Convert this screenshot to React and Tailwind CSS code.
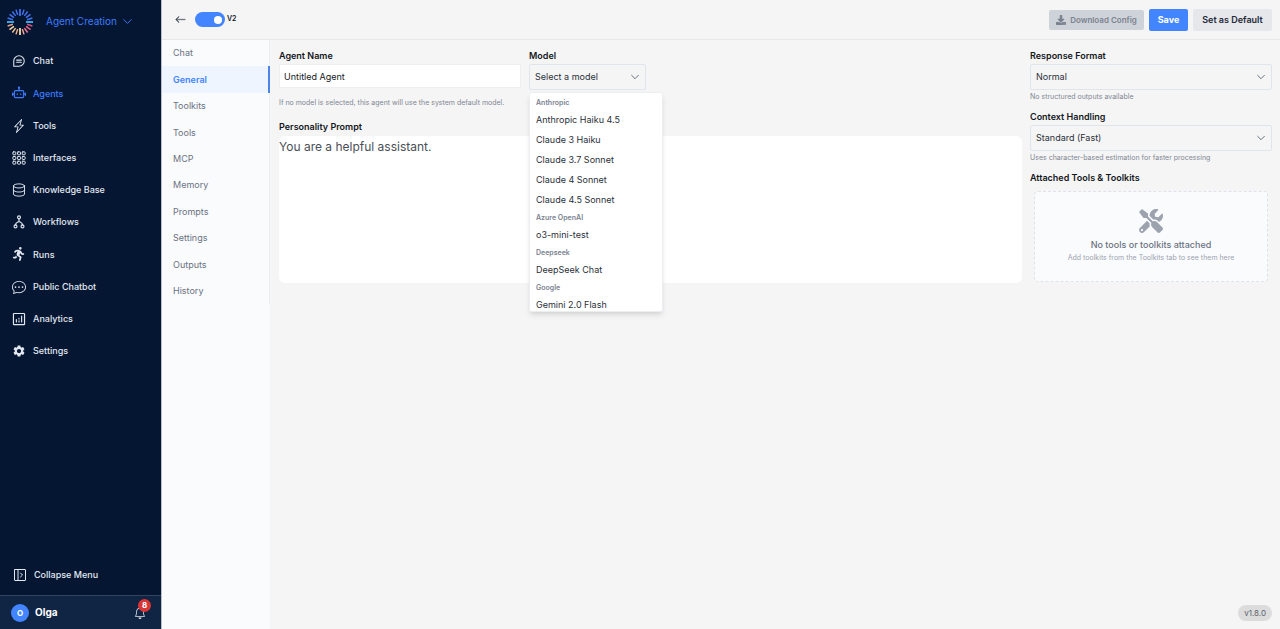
import { useState } from "react";
import {
  BsArrowLeft,
  BsBell,
  BsChatDots,
  BsLightningCharge,
} from "react-icons/bs";
import { FaDownload, FaTools } from "react-icons/fa";
import { FaPersonRunning } from "react-icons/fa6";
import { MdSettings } from "react-icons/md";

const Svg = ({ children, width = 1.5 }) => (
  <svg
    viewBox="0 0 24 24"
    className="size-full"
    fill="none"
    stroke="currentColor"
    strokeWidth={width}
    strokeLinecap="round"
    strokeLinejoin="round"
  >
    {children}
  </svg>
);

const ChatIcon = () => (
  <Svg width={1.8}>
    <path d="M3 21V12a9 9 0 1 1 9 9H3z" />
    <path d="M8 10.5h8M8 14h8" />
  </Svg>
);

const AgentIcon = () => (
  <Svg width={2}>
    <rect x="4" y="8" width="16" height="12" rx="2" />
    <path d="M12 8V3M1 12v4M23 12v4M2 14h2M20 14h2M9 13.5v1M15 13.5v1" />
    <circle cx="12" cy="3" r="1" />
  </Svg>
);

const GridIcon = () => (
  <Svg width={1.7}>
    {[1.5, 9.5, 17.5].map((y) =>
      [1.5, 9.5, 17.5].map((x) => (
        <rect key={`${x}-${y}`} x={x} y={y} width="5" height="5" rx="1" />
      ))
    )}
  </Svg>
);

const DatabaseIcon = () => (
  <Svg width={1.6}>
    <ellipse cx="12" cy="5" rx="9.5" ry="3.5" />
    <path d="M2.5 5v14c0 2 4.2 3.5 9.5 3.5s9.5-1.5 9.5-3.5V5" />
    <path d="M2.5 12c0 2 4.2 3.5 9.5 3.5s9.5-1.5 9.5-3.5" />
  </Svg>
);

const WorkflowIcon = () => (
  <Svg width={2}>
    <circle cx="12" cy="4" r="2.5" />
    <circle cx="6" cy="19.5" r="2.5" />
    <circle cx="18" cy="19.5" r="2.5" />
    <path d="M12 6.5V11M6 17c0-4 2-4 6-6 4 2 6 2 6 6" />
  </Svg>
);

const AnalyticsIcon = () => (
  <Svg width={2}>
    <rect x="2.5" y="2.5" width="19" height="19" rx="1" />
    <path d="M7.5 13v4M12 11v1M12 15v2M16.5 7v10" />
  </Svg>
);

const CollapseIcon = () => (
  <Svg width={2}>
    <rect x="1" y="1" width="22" height="22" rx="1" />
    <path d="M8 1v22M13 8l4 4-4 4" />
  </Svg>
);

const Chevron = () => (
  <Svg width={2.5}>
    <path d="M2 7l10 10L22 7" />
  </Svg>
);

// Ring of dashes: blue over the top, cyan at the sides, warm tones below
const rays = [
  "#3e6ff0", "#4a72e8", "#3e6ff0", "#4a72e8", "#3e6ff0", "#41b5f5",
  "#d9567f", "#e8688a", "#f07a90", "#f7a59a", "#f7dcae", "#f5b08a",
  "#f0c08a", "#f7dcae", "#e9a08c", "#41b5f5", "#3e6ff0", "#4a72e8",
  "#3e6ff0", "#4a72e8",
];

const Logo = () => (
  <svg viewBox="0 0 28 28" className="size-7 shrink-0">
    {rays.map((color, i) => (
      <line
        key={i}
        x1="14"
        y1="1"
        x2="14"
        y2={i % 5 === 0 ? 8 : 6.5}
        stroke={color}
        strokeWidth={i % 5 === 0 ? 1.8 : 1.5}
        transform={`rotate(${i * 18} 14 14)`}
      />
    ))}
  </svg>
);

const menu = [
  { label: "Chat", icon: ChatIcon },
  { label: "Agents", icon: AgentIcon },
  { label: "Tools", icon: BsLightningCharge },
  { label: "Interfaces", icon: GridIcon },
  { label: "Knowledge Base", icon: DatabaseIcon },
  { label: "Workflows", icon: WorkflowIcon },
  { label: "Runs", icon: FaPersonRunning },
  { label: "Public Chatbot", icon: BsChatDots },
  { label: "Analytics", icon: AnalyticsIcon },
  { label: "Settings", icon: MdSettings },
];

const tabs = [
  "Chat",
  "General",
  "Toolkits",
  "Tools",
  "MCP",
  "Memory",
  "Prompts",
  "Settings",
  "Outputs",
  "History",
];

const models = [
  {
    provider: "Anthropic",
    items: [
      "Anthropic Haiku 4.5",
      "Claude 3 Haiku",
      "Claude 3.7 Sonnet",
      "Claude 4 Sonnet",
      "Claude 4.5 Sonnet",
    ],
  },
  { provider: "Azure OpenAI", items: ["o3-mini-test"] },
  { provider: "Deepseek", items: ["DeepSeek Chat"] },
  { provider: "Google", items: ["Gemini 2.0 Flash"] },
];

const Sidebar = () => (
  <aside className="w-[162px] shrink-0 flex flex-col bg-[#051633] border-r border-[#b9bec8] text-[#e3e8f0]">
    <div className="h-[45px] flex items-center pl-[6px] pb-[2px]">
      <Logo />
      <button className="flex items-center gap-[6px] ml-3 text-[10px] text-[#3e7bfa]">
        Agent Creation
        <span className="size-[9px]">
          <Chevron />
        </span>
      </button>
    </div>
    <nav className="h-[322px] flex flex-col">
      {menu.map(({ label, icon: Icon }) => (
        <a
          key={label}
          href="#"
          className={`flex-1 flex items-center pl-3 gap-[7px] text-[9px] font-medium ${
            label === "Agents" ? "text-[#3e7bfa]" : ""
          }`}
        >
          <span className="size-[14px]">
            <Icon className="size-full" />
          </span>
          {label}
        </a>
      ))}
    </nav>
    <button className="mt-auto mb-3 h-4 flex items-center gap-2 pl-[14px] text-[9px] font-medium">
      <span className="size-3">
        <CollapseIcon />
      </span>
      Collapse Menu
    </button>
    <div className="h-[34px] flex items-center pl-[11px] pr-[15px] bg-[#102444] border-t border-[#33425e]">
      <span className="size-[18px] rounded-full bg-[#4285ff] text-white text-[8px] font-bold flex items-center justify-center">
        O
      </span>
      <span className="ml-[6px] text-[10px] font-bold text-white">Olga</span>
      <button aria-label="Notifications" className="relative ml-auto">
        <BsBell className="size-3" />
        <span className="absolute -top-[8px] left-[4px] size-[13px] rounded-full bg-[#d93636] text-white text-[8px] font-bold flex items-center justify-center">
          8
        </span>
      </button>
    </div>
  </aside>
);

const TopBar = () => {
  const [enabled, setEnabled] = useState(true);

  return (
    <header className="h-10 shrink-0 flex items-center pl-[13px] pr-2 border-b border-[#e6e8ec]">
      <button aria-label="Back" className="text-[#3c4452]">
        <BsArrowLeft className="size-[11px]" strokeWidth="0.5" />
      </button>
      <label className="flex items-center ml-[9px] gap-[2px] text-[7px] font-semibold">
        <input
          type="checkbox"
          checked={enabled}
          onChange={() => setEnabled(!enabled)}
          className="peer sr-only"
        />
        <span className="w-[30px] h-[15px] p-[3px] rounded-full flex items-center bg-gray-400 peer-checked:bg-[#4285ff] peer-checked:justify-end">
          <span className="size-2 rounded-full bg-white" />
        </span>
        V2
      </label>
      <div className="ml-auto flex items-center">
        <button
          disabled
          className="h-5 w-[95px] flex items-center justify-center gap-1 rounded-[2px] bg-[#ced2d9] text-[8px] font-semibold text-[#7b838f]"
        >
          <FaDownload className="size-[10px]" />
          Download Config
        </button>
        <button className="ml-[5px] h-[22px] w-[39px] rounded-[2px] bg-[#4285ff] text-[9px] font-bold text-white">
          Save
        </button>
        <button className="ml-[5px] h-[22px] w-[79px] rounded-[2px] bg-[#e5e7eb] text-[9px] font-semibold text-[#1f2937]">
          Set as Default
        </button>
      </div>
    </header>
  );
};

const Tabs = () => (
  <nav className="w-[108px] shrink-0 bg-[#fafbfd]">
    <div className="h-[264px] flex flex-col">
      {tabs.map((tab) => (
        <a
          key={tab}
          href="#"
          className={`flex-1 flex items-center pl-[11px] text-[9px] ${
            tab === "General"
              ? "bg-[#eef5ff] border-r-2 border-[#4c84e8] font-semibold text-[#4285ff]"
              : "border-r border-[#eceef1] text-[#6b7280]"
          }`}
        >
          {tab}
        </a>
      ))}
    </div>
  </nav>
);

const SelectBox = ({ id, value, ...rest }) => (
  <div className="relative">
    <select
      id={id}
      className="block w-full h-[26px] pl-[5px] pr-5 appearance-none rounded-[2px] border border-[#e0e5ec] bg-[#f5f5f6] text-[9px] text-[#2b3039]"
      {...rest}
    >
      <option>{value}</option>
    </select>
    <span className="pointer-events-none absolute right-[7px] top-[9px] size-2 text-[#4b5563]">
      <Chevron />
    </span>
  </div>
);

const Label = ({ id, children }) => (
  <label
    htmlFor={id}
    className="block text-[9px] leading-[14px] font-semibold text-[#14171c]"
  >
    {children}
  </label>
);

const ModelField = () => {
  const [open, setOpen] = useState(true);
  const [model, setModel] = useState("Select a model");

  const handleSelect = (item) => {
    setModel(item);
    setOpen(false);
  };

  return (
    <div className="relative w-[117px]">
      <Label id="model">Model</Label>
      <div className="mt-px">
        <SelectBox
          id="model"
          value={model}
          onMouseDown={(e) => {
            e.preventDefault();
            setOpen(!open);
          }}
        />
      </div>
      {open && (
        <div
          role="listbox"
          aria-label="Models"
          className="absolute left-0 top-[43px] z-10 w-[134px] h-[220px] pt-[2px] overflow-y-auto [scrollbar-width:none] rounded-[3px] border border-[#eceef1] bg-white shadow-md"
        >
          {models.map(({ provider, items }) => (
            <div key={provider} role="group" aria-label={provider}>
              <p className="h-[15px] px-[6px] text-[7px] leading-[15px] font-semibold text-[#7a8291]">
                {provider}
              </p>
              {items.map((item) => (
                <button
                  key={item}
                  role="option"
                  aria-selected={item === model}
                  onClick={() => handleSelect(item)}
                  className="block w-full h-5 px-[6px] pb-px text-left text-[9px] text-[#2b3039] hover:bg-gray-100"
                >
                  {item}
                </button>
              ))}
            </div>
          ))}
        </div>
      )}
    </div>
  );
};

const AgentForm = () => (
  <section className="flex-1 min-w-0">
    <div className="flex gap-2">
      <div className="w-[242px]">
        <Label id="name">Agent Name</Label>
        <input
          id="name"
          defaultValue="Untitled Agent"
          className="block mt-px w-full h-6 px-1 border border-[#eceef1] bg-white text-[9px] text-[#14171c]"
        />
        <p className="mt-[10px] text-[7px] leading-[10px] text-[#7f8794]">
          If no model is selected, this agent will use the system default model.
        </p>
      </div>
      <ModelField />
    </div>
    <div className="mt-3">
      <Label id="prompt">Personality Prompt</Label>
      <textarea
        id="prompt"
        defaultValue="You are a helpful assistant."
        className="block mt-[2px] w-full h-[147px] py-[3px] resize-none rounded-[6px] bg-white text-xs text-[#4a4f57]"
      />
    </div>
  </section>
);

const SettingsPanel = () => (
  <section className="w-[242px] shrink-0">
    <Label id="format">Response Format</Label>
    <div className="mt-px">
      <SelectBox id="format" value="Normal" />
    </div>
    <p className="mt-[2px] text-[7px] leading-[10px] text-[#7f8794]">
      No structured outputs available
    </p>
    <div className="mt-2">
      <Label id="context">Context Handling</Label>
      <div className="mt-px">
        <SelectBox id="context" value="Standard (Fast)" />
      </div>
      <p className="mt-[2px] text-[7px] leading-[10px] text-[#7f8794]">
        Uses character-based estimation for faster processing
      </p>
    </div>
    <h2 className="mt-2 text-[9px] leading-[14px] font-semibold text-[#14171c]">
      Attached Tools & Toolkits
    </h2>
    <div className="mt-[6px] mx-1 h-[91px] pt-[17px] flex flex-col items-center rounded-[4px] border border-dashed border-[#dfe3e9] bg-[#fafbfd] text-center">
      <FaTools className="size-6 text-[#9ca3af]" />
      <p className="mt-[5px] text-[9px] leading-[14px] font-medium text-[#6b7280]">
        No tools or toolkits attached
      </p>
      <p className="text-[7px] leading-3 text-[#9ca3af]">
        Add toolkits from the Toolkits tab to see them here
      </p>
    </div>
  </section>
);

export default function App() {
  return (
    <div className="min-h-screen flex bg-[#f5f5f5] font-[Inter,sans-serif] text-[#14171c]">
      <Sidebar />
      <div className="flex-1 min-w-0 flex flex-col">
        <TopBar />
        <div className="flex-1 flex">
          <Tabs />
          <main className="flex-1 min-w-0 flex flex-col pt-[9px] pl-[9px] pr-2 pb-2">
            <div className="flex gap-2">
              <AgentForm />
              <SettingsPanel />
            </div>
            <span className="mt-auto self-end h-4 px-[6px] rounded-full bg-[#dcdcdc] text-[8px] leading-4 text-[#5b616b]">
              v1.8.0
            </span>
          </main>
        </div>
      </div>
    </div>
  );
}
